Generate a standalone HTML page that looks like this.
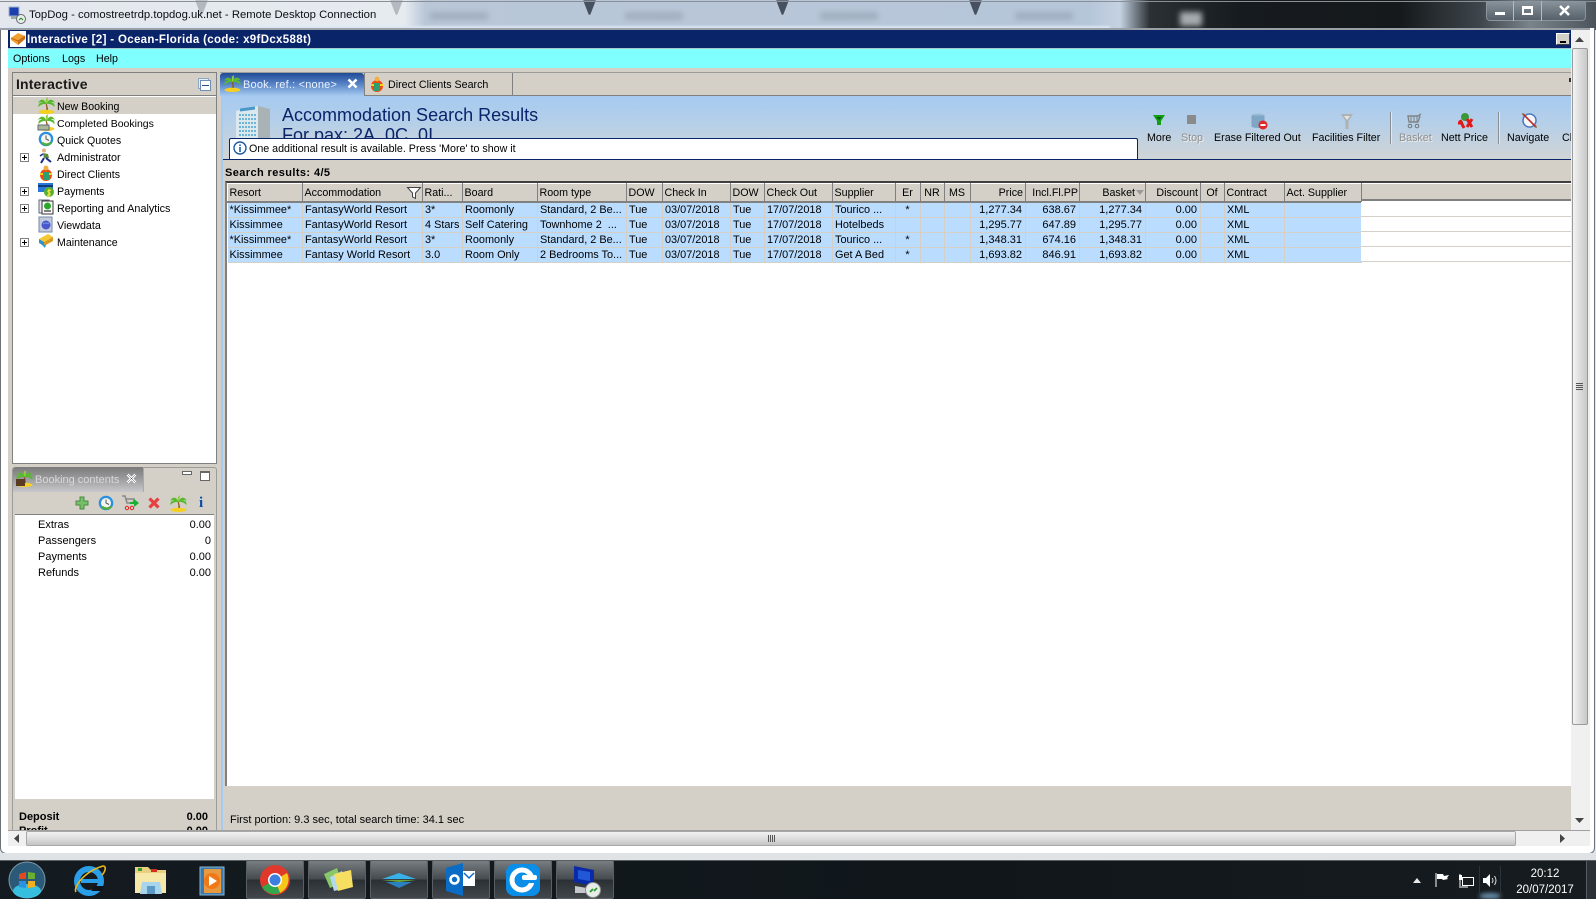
<!DOCTYPE html>
<html><head><meta charset="utf-8"><title>TopDog</title>
<style>
html,body{margin:0;padding:0;width:1596px;height:899px;overflow:hidden;background:#dfe6ee}
*{box-sizing:border-box}
body{font:10.7px "Liberation Sans",sans-serif;color:#000;position:relative}
.a{position:absolute;white-space:nowrap}
svg{position:absolute;overflow:visible}
.lb{position:absolute;white-space:nowrap;line-height:14px;height:14px;margin-top:1px}
.n{font-size:11px}
table{border-collapse:collapse;table-layout:fixed;position:absolute;left:227px;top:183px;width:1134px}
th{height:18px;background:#d4d0c8;font-weight:normal;text-align:left;padding:1px 0 0 1.5px;border-top:1px solid #fff;border-left:1px solid #fff;border-right:1px solid #808080;border-bottom:2px solid #808080;white-space:nowrap;overflow:hidden;line-height:14px;font-size:10.7px}
td{height:15px;background:#b9dcff;padding:1px 0 0 2px;border-right:1px solid #d4d0c8;border-bottom:1px solid #d4d0c8;white-space:nowrap;overflow:hidden;line-height:13px;font-size:10.9px}
th.r{text-align:right;padding:1px 2px 0 0}
td.r{text-align:right;padding:1px 3px 0 0;font-size:11px}
th.c,td.c{text-align:center;padding-left:0;padding-right:1px}
.rr{position:absolute;left:1361px;width:210px;height:15px;background:#fff;border-bottom:1px solid #d4d0c8}
.tb{position:absolute;top:860px;height:39px;width:58px;border:1px solid #5a5f64;border-radius:2px;background:linear-gradient(#777d81,#464b50 48%,#2b3034 52%,#42474c)}
.w{position:absolute;top:0;width:13px;height:15px;background:#2b3340;clip-path:polygon(0 0,100% 0,55% 100%,45% 100%);filter:blur(.8px)}
.g{position:absolute;top:12px;width:58px;height:8px;background:#8e9bab;filter:blur(3px);opacity:.55}
</style></head><body>

<!-- blurred title background -->
<div class="a" style="left:0;top:0;width:1596px;height:30px;background:linear-gradient(90deg,#e4e8ee 0,#e6ebf0 405px,#b9c7d8 425px,#b6c6d9 1090px,#c4d2e2 1120px,#2b3034 1150px,#161b1f 1240px,#15191c 1400px,#3e464b 1480px,#79838b 1530px,#4b545a 1596px);overflow:hidden">
  <div class="w" style="left:195px;background:#555c66;opacity:.35"></div><div class="w" style="left:390px;background:#555c66;opacity:.35"></div>
  <div class="w" style="left:583px;opacity:.8"></div><div class="w" style="left:776px;opacity:.8"></div><div class="w" style="left:969px;opacity:.8"></div>
  <div class="g" style="left:430px"></div><div class="g" style="left:625px"></div><div class="g" style="left:820px"></div><div class="g" style="left:1015px"></div>
  <div class="a" style="left:1180px;top:12px;width:22px;height:14px;background:#dfe4e8;filter:blur(3px);opacity:.7"></div>
  <div class="a" style="left:0;top:26px;width:1110px;height:4px;background:#dbe7f4;filter:blur(1px)"></div>
</div>
<div class="a" style="left:0;top:1px;width:1596px;height:1px;background:#8b9096"></div>

<!-- window body frame -->
<div class="a" style="left:0;top:28px;width:1595px;height:826px;background:#fff;border:1px solid #6e7378;border-top:0;border-radius:0 0 6px 6px"></div>
<div class="a" style="left:0;top:28px;width:1590px;height:2px;background:#9aa0a6"></div>
<div class="a" style="left:0;top:853px;width:1596px;height:7px;background:#dfe3e6"></div>

<!-- RDP icon + title -->
<svg style="left:8px;top:6px" width="18" height="18" viewBox="0 0 18 18"><rect x="1" y="1" width="10" height="9" fill="#1c3fb0" stroke="#9fb0c8"/><rect x="3" y="10" width="8" height="3" fill="#9aa"/><circle cx="13" cy="13" r="4.5" fill="#e8efe8" stroke="#667"/><path d="M11 14l2-2M13 12l2 2" stroke="#2a8a2a" stroke-width="1.2"/></svg>
<div class="a" style="left:29px;top:7px;font-size:11.3px;line-height:16px;color:#0a0f14">TopDog - comostreetrdp.topdog.uk.net - Remote Desktop Connection</div>

<!-- window controls -->
<div class="a" style="left:1486px;top:1px;width:100px;height:20px;border:1px solid #8d959c;border-top:0;border-radius:0 0 4px 4px;background:linear-gradient(#8a949c,#56606a)"></div>
<div class="a" style="left:1513px;top:1px;width:1px;height:20px;background:#b5bcc2"></div>
<div class="a" style="left:1541px;top:1px;width:1px;height:20px;background:#b5bcc2"></div>
<div class="a" style="left:1495px;top:12px;width:10px;height:3px;background:#fff"></div>
<div class="a" style="left:1522px;top:6px;width:11px;height:9px;border:2px solid #fff;border-top-width:3px"></div>
<svg style="left:1558px;top:5px" width="14" height="12"><path d="M2 1l9 9M11 1l-9 9" stroke="#fff" stroke-width="2.6"/></svg>

<!-- app title -->
<div class="a" style="left:8px;top:30px;width:1563px;height:18px;background:#0a246a"></div>
<div class="a" style="left:10px;top:31px;width:16px;height:16px;background:#fff"></div>
<svg style="left:10px;top:32px" width="16" height="14" viewBox="0 0 16 14"><path d="M1 6L8 1l7 3v3L8 13 1 8z" fill="#f0a030"/><path d="M1 6l7 3 7-5" fill="none" stroke="#c46a10"/><path d="M8 9v4l7-6V4z" fill="#c8701a"/></svg>
<div class="a" style="left:27px;top:32px;color:#fff;font-weight:bold;font-size:11.5px;line-height:16px;letter-spacing:.33px">Interactive [2] - Ocean-Florida (code: x9fDcx588t)</div>
<div class="a" style="left:1556px;top:33px;width:14px;height:12px;background:#d4d0c8;border:1px solid #fff;border-right-color:#404040;border-bottom-color:#404040"></div>
<div class="a" style="left:1560px;top:41px;width:6px;height:2px;background:#000"></div>

<!-- menu -->
<div class="a" style="left:8px;top:48px;width:1563px;height:20px;background:#80ffff;border-top:1px solid #a6c8d0"></div>
<div class="lb" style="left:13px;top:51px">Options</div>
<div class="lb" style="left:62px;top:51px">Logs</div>
<div class="lb" style="left:96px;top:51px">Help</div>

<!-- main background -->
<div class="a" style="left:8px;top:68px;width:1563px;height:762px;background:#d4d0c8"></div>

<!-- LEFT PANEL: Interactive -->
<div class="a" style="left:12px;top:72px;width:205px;height:392px;border:1px solid #808080;background:#fff"></div>
<div class="a" style="left:13px;top:73px;width:203px;height:23px;background:#d4d0c8;border-bottom:1px solid #808080"></div>
<div class="a" style="left:16px;top:76px;font-size:14px;font-weight:bold;line-height:17px;color:#1a1a1a;letter-spacing:.15px">Interactive</div>
<div class="a" style="left:198px;top:78px;width:11px;height:11px;border:1px solid #8fa6c0;background:#e8eef6"></div>
<div class="a" style="left:200px;top:80px;width:11px;height:11px;border:1px solid #6f8fb5;background:#fff"></div>
<div class="a" style="left:202px;top:85px;width:7px;height:1px;background:#2a4f8a"></div>
<div class="a" style="left:13px;top:97px;width:203px;height:17px;background:#d4d0c8"></div>

<div class="lb" style="left:57px;top:99px;font-size:10.6px">New Booking</div>
<div class="lb" style="left:57px;top:116px;font-size:10.5px">Completed Bookings</div>
<div class="lb" style="left:57px;top:133px;font-size:10.6px">Quick Quotes</div>
<div class="lb" style="left:57px;top:150px;font-size:10.8px">Administrator</div>
<div class="lb" style="left:57px;top:167px;font-size:10.6px">Direct Clients</div>
<div class="lb" style="left:57px;top:184px">Payments</div>
<div class="lb" style="left:57px;top:201px;font-size:10.8px">Reporting and Analytics</div>
<div class="lb" style="left:57px;top:218px">Viewdata</div>
<div class="lb" style="left:57px;top:235px;font-size:10.6px">Maintenance</div>

<svg width="0" height="0" style="position:absolute"><defs>
<symbol id="palm" viewBox="0 0 16 16"><path d="M7 6c1 3 1 5 .5 8h2C9.500 11 9 8 8 6z" fill="#8a5a20"/><path d="M8 6.500C6 1.500 2.500 1 0 5.500c2-1 3-1 4-.5-2.500 0-4 2-3.500 4.500C2.500 7 5 6.500 8 6.500zM8 6.500c2-5 5.500-5.500 8-1-2-1-3-1-4-.5 2.500 0 4 2 3.500 4.500C13.500 7 11 6.500 8 6.500z" fill="#58b82e"/><path d="M8 6.500C6.500 3.500 7.500 1 9 0c.5 2.500.5 4.500-1 6.500z" fill="#8ed040"/><ellipse cx="8" cy="14" rx="7.500" ry="2" fill="#f5d020"/></symbol>
<symbol id="clock" viewBox="0 0 16 16"><circle cx="8" cy="8" r="7.300" fill="#2b8fe0"/><circle cx="8" cy="8" r="5" fill="#f4f4f0"/><path d="M8 4.500V8l3 1.500" stroke="#555" fill="none"/><path d="M3 12a7 7 0 0 0 11 0l-2-1a5 5 0 0 1-7 0z" fill="#4cb030"/></symbol>
<symbol id="plus" viewBox="0 0 9 9"><rect x=".5" y=".5" width="8" height="8" fill="#fff" stroke="#808080"/><path d="M2 4.500h5M4.500 2v5" stroke="#000"/></symbol>
</defs></svg>

<svg style="left:38px;top:97px" width="17" height="17"><use href="#palm" width="17" height="17"/></svg>
<svg style="left:38px;top:114px" width="17" height="17"><use href="#palm" width="17" height="17"/><rect x="0" y="11" width="11" height="5" fill="#aab89a" stroke="#667"/></svg>
<svg style="left:38px;top:131px" width="16" height="16"><use href="#clock" width="16" height="16"/></svg>
<svg style="left:38px;top:148px" width="16" height="16" viewBox="0 0 16 16"><circle cx="6" cy="2.500" r="2" fill="#e8b080"/><path d="M5 5l5 1 1 4H6z" fill="#5a8a3a"/><path d="M6 10l-3 5M8 10l5 4" stroke="#1a2a8a" stroke-width="2"/><path d="M5 6L2 8" stroke="#1a2a8a" stroke-width="1.500"/></svg>
<svg style="left:38px;top:165px" width="16" height="16" viewBox="0 0 16 16"><circle cx="8" cy="10" r="6" fill="#f04a10"/><rect x="5" y="7" width="6" height="8" fill="#2aa070"/><circle cx="8" cy="3" r="2.400" fill="#f0b040"/><path d="M2 9h3M11 9h3" stroke="#f5d020" stroke-width="2"/></svg>
<svg style="left:38px;top:182px" width="16" height="16" viewBox="0 0 16 16"><rect x="0" y="1" width="15" height="9" fill="#2a78d8"/><rect x="0" y="3" width="15" height="2" fill="#123a80"/><circle cx="11" cy="10" r="5" fill="#58b030"/><path d="M9 13c3 1 4-1 2-2.500-2-1-1-3 2-2M11 7v8" stroke="#f6e040" fill="none" stroke-width="1.200"/></svg>
<svg style="left:38px;top:199px" width="16" height="16" viewBox="0 0 16 16"><rect x="1" y="1" width="10" height="13" fill="#e8e8ee" stroke="#667"/><rect x="4" y="2" width="11" height="13" fill="#fff" stroke="#333"/><circle cx="9.500" cy="7" r="3.500" fill="#2aa82a"/><path d="M6 12h7" stroke="#000"/></svg>
<svg style="left:38px;top:216px" width="16" height="16" viewBox="0 0 16 16"><rect x="1" y="1" width="13" height="15" fill="#c4ccdc" stroke="#7788a8"/><circle cx="8" cy="9" r="4.500" fill="#4a58d0"/><path d="M5 8c2-2 4 0 6-1" stroke="#80a0f0"/></svg>
<svg style="left:38px;top:233px" width="16" height="16" viewBox="0 0 16 16"><path d="M1 6l9-5 5 3-9 5z" fill="#f4c830"/><path d="M1 6l5 3v4L1 10z" fill="#2a90d0"/><path d="M6 9l9-5v4l-9 5z" fill="#d89a20"/><path d="M3 11l4 4 1-3z" fill="#2aa0d8"/></svg>

<svg style="left:20px;top:153px" width="9" height="9"><use href="#plus" width="9" height="9"/></svg>
<svg style="left:20px;top:187px" width="9" height="9"><use href="#plus" width="9" height="9"/></svg>
<svg style="left:20px;top:204px" width="9" height="9"><use href="#plus" width="9" height="9"/></svg>
<svg style="left:20px;top:238px" width="9" height="9"><use href="#plus" width="9" height="9"/></svg>

<!-- LEFT PANEL: Booking -->
<div class="a" style="left:12px;top:467px;width:205px;height:363px;border:1px solid #9c9c98;border-bottom:0;border-radius:3px 3px 0 0;background:#d4d0c8"></div>
<div class="a" style="left:13px;top:467px;width:131px;height:25px;background:linear-gradient(#7a7a7a,#9a9a9c 45%,#c8c8cc);border-right:1px solid #aaa;border-radius:3px 0 0 0"></div>
<svg style="left:16px;top:470px" width="17" height="17"><use href="#palm" width="17" height="17"/><rect x="0" y="9" width="9" height="7" fill="#5a3a22"/></svg>
<div class="lb n" style="left:35px;top:472px;color:#d8d8d8">Booking contents</div>
<svg style="left:126px;top:473px" width="11" height="11"><path d="M1.500 1.500l8 8M9.500 1.500l-8 8" stroke="#fff" stroke-width="2.600"/><path d="M1.500 1.500l8 8M9.500 1.500l-8 8" stroke="#444" stroke-width=".5"/></svg>
<div class="a" style="left:182px;top:471px;width:10px;height:4px;background:#fff;border:1px solid #666"></div>
<div class="a" style="left:200px;top:471px;width:10px;height:10px;background:#fff;border:1px solid #666;border-top-width:2px"></div>
<div class="a" style="left:15px;top:492px;width:199px;height:23px;background:#d4d0c8;border-bottom:1px solid #808080"></div>
<svg style="left:76px;top:497px" width="12" height="12"><path d="M4 0h4v4h4v4H8v4H4V8H0V4h4z" fill="#76c06a" stroke="#4e8a44"/></svg>
<svg style="left:98px;top:495px" width="16" height="16"><use href="#clock" width="16" height="16"/></svg>
<svg style="left:122px;top:495px" width="17" height="16" viewBox="0 0 17 16"><path d="M0 1h3l2 7h6l1-4H4" fill="none" stroke="#888" stroke-width="1.500"/><circle cx="5" cy="13" r="1.700" fill="none" stroke="#e02020"/><circle cx="10" cy="13" r="1.700" fill="none" stroke="#e02020"/><path d="M8 7h4V4l5 4-5 4V9H8z" fill="#18b030"/></svg>
<svg style="left:148px;top:497px" width="12" height="12"><path d="M1.500 1.500l9 9M10.500 1.500l-9 9" stroke="#e84040" stroke-width="3.200"/></svg>
<svg style="left:170px;top:495px" width="17" height="17"><use href="#palm" width="17" height="17"/></svg>
<div class="a" style="left:199px;top:495px;font:bold 15px/16px 'Liberation Serif',serif;color:#0a4aa8">i</div>
<div class="a" style="left:15px;top:515px;width:199px;height:284px;background:#fff"></div>
<div class="lb n" style="left:38px;top:517px">Extras</div><div class="lb n" style="right:1385px;top:517px">0.00</div>
<div class="lb n" style="left:38px;top:533px">Passengers</div><div class="lb n" style="right:1385px;top:533px">0</div>
<div class="lb n" style="left:38px;top:549px">Payments</div><div class="lb n" style="right:1385px;top:549px">0.00</div>
<div class="lb n" style="left:38px;top:565px">Refunds</div><div class="lb n" style="right:1385px;top:565px">0.00</div>
<div class="lb n" style="left:19px;top:809px;font-weight:bold">Deposit</div><div class="lb n" style="right:1388px;top:809px;font-weight:bold">0.00</div>
<div class="lb n" style="left:19px;top:823px;font-weight:bold">Profit</div><div class="lb n" style="right:1388px;top:823px;font-weight:bold">0.00</div>

<!-- splitter blue line -->
<div class="a" style="left:221px;top:96px;width:2px;height:734px;background:#a6caf0"></div>

<!-- Tabs -->
<div class="a" style="left:220px;top:72px;width:1351px;height:24px;background:#d4d0c8;border-top:1px solid #9c9c98;border-bottom:1px solid #808080"></div>
<div class="a" style="left:220px;top:73px;width:144px;height:23px;border-radius:3px 3px 0 0;background:linear-gradient(#1f4a96,#5a86c8 50%,#a6caf0)"></div>
<div class="a" style="left:364px;top:73px;width:149px;height:23px;border-right:1px solid #808080;border-left:1px solid #808080"></div>
<svg style="left:224px;top:75px" width="17" height="17"><use href="#palm" width="17" height="17"/></svg>
<div class="lb n" style="left:243px;top:77px;color:#eaf2ff;letter-spacing:.2px">Book. ref.: &lt;none&gt;</div>
<svg style="left:347px;top:78px" width="11" height="11"><path d="M1.500 1.500l8 8M9.500 1.500l-8 8" stroke="#fff" stroke-width="2.600"/></svg>
<svg style="left:369px;top:76px" width="16" height="16" viewBox="0 0 16 16"><circle cx="8" cy="10" r="6" fill="#f04a10"/><rect x="5" y="7" width="6" height="8" fill="#2aa070"/><circle cx="8" cy="3" r="2.400" fill="#f0b040"/><path d="M2 9h3M11 9h3" stroke="#f5d020" stroke-width="2"/></svg>
<div class="lb" style="left:388px;top:77px">Direct Clients Search</div>
<div class="a" style="left:1569px;top:78px;width:2px;height:4px;background:#333"></div>

<!-- blue header -->
<div class="a" style="left:223px;top:96px;width:1348px;height:64px;background:linear-gradient(#a6caf0,#b4cfe9 40%,#d0d4d6);border-bottom:1px solid #0a246a"></div>
<svg style="left:236px;top:103px" width="36" height="36" viewBox="0 0 36 36"><path d="M0 8L22 3v33H0z" fill="#dbe8ee"/><path d="M22 3l12 3v30H22z" fill="#a9b3b6"/><path d="M4 5.500l15-2v3l-15 2z" fill="#4a98c8"/><path d="M3 12h17M3 16h17M3 20h17M3 24h17M3 28h17M3 32h17" stroke="#6cb4d8" stroke-width="2" stroke-dasharray="2 1"/></svg>
<div class="a" style="left:282px;top:104px;font-size:18px;line-height:22px;color:#0a246a">Accommodation Search Results</div>
<div class="a" style="left:282px;top:124px;height:14px;overflow:hidden;font-size:18px;line-height:22px;color:#0a246a">For pax: 2A, 0C, 0I</div>
<div class="a" style="left:229px;top:138px;width:909px;height:21px;background:#fff;border:1px solid #0a246a;border-bottom:0;border-radius:2px 2px 0 0"></div>
<svg style="left:233px;top:141px" width="14" height="14"><circle cx="7" cy="7" r="6" fill="#fff" stroke="#1a5aa8" stroke-width="1.400"/><path d="M7 3.500v1.500M7 6v5" stroke="#1a5aa8" stroke-width="1.600"/></svg>
<div class="lb" style="left:249px;top:141px">One additional result is available. Press 'More' to show it</div>

<!-- toolbar -->
<svg style="left:1153px;top:114px" width="12" height="12"><path d="M0 1h12L8 7v4H4V7z" fill="#12a012"/><path d="M3 3h6L6 6z" fill="#0a600a"/></svg>
<div class="a" style="left:1187px;top:115px;width:9px;height:9px;background:#8a8a8a"></div>
<svg style="left:1251px;top:113px" width="18" height="17"><ellipse cx="7" cy="2.500" rx="6.500" ry="2" fill="#9abcd4"/><path d="M.5 2.500v11c1 2 12 2 13 0v-11" fill="#7fa6c4"/><circle cx="12" cy="12" r="4.500" fill="#e02828"/><rect x="9.500" y="11" width="5" height="2" fill="#fff"/></svg>
<svg style="left:1341px;top:113px" width="12" height="17"><path d="M0 1h12L7.500 8v8h-3V8z" fill="#aeb2b2"/><path d="M3 3h6L6 7z" fill="#e4e4e4"/></svg>
<div class="a" style="left:1390px;top:112px;width:1px;height:32px;background:#8a8f96"></div>
<div class="a" style="left:1391px;top:112px;width:1px;height:32px;background:#e4e8ec"></div>
<svg style="left:1407px;top:113px" width="15" height="16" viewBox="0 0 15 16"><path d="M14 1L11 3H1l1 6h9l2-6" fill="none" stroke="#808488" stroke-width="1.400"/><path d="M4 3v6M7 3v6M10 3v6" stroke="#808488"/><circle cx="3" cy="13" r="1.800" fill="none" stroke="#707478"/><circle cx="10" cy="13" r="1.800" fill="none" stroke="#707478"/></svg>
<svg style="left:1457px;top:112px" width="17" height="17" viewBox="0 0 17 17"><circle cx="8" cy="5" r="4" fill="#38983a"/><path d="M1 11h5M3 8l4 8M10 7l5 8M15 7l-5 8" stroke="#e01818" stroke-width="3"/></svg>
<div class="a" style="left:1498px;top:112px;width:1px;height:32px;background:#8a8f96"></div>
<div class="a" style="left:1499px;top:112px;width:1px;height:32px;background:#e4e8ec"></div>
<svg style="left:1521px;top:112px" width="17" height="17" viewBox="0 0 17 17"><circle cx="8.500" cy="8.500" r="6.500" fill="#f4f6fa" stroke="#4a78b8" stroke-width="1.500"/><path d="M2 2l13 13" stroke="#c02828" stroke-width="1.600"/><path d="M1 1l3 1-2 2zM16 16l-3-1 2-2z" fill="#8a6020"/></svg>
<div class="lb" style="left:1147px;top:130px">More</div>
<div class="lb" style="left:1181px;top:130px;color:#8f8f8f;text-shadow:1px 1px 0 #eee">Stop</div>
<div class="lb" style="left:1214px;top:130px">Erase Filtered Out</div>
<div class="lb" style="left:1312px;top:130px">Facilities Filter</div>
<div class="lb" style="left:1399px;top:130px;color:#8f8f8f;text-shadow:1px 1px 0 #eee">Basket</div>
<div class="lb" style="left:1441px;top:130px">Nett Price</div>
<div class="lb" style="left:1507px;top:130px">Navigate</div>
<div class="a" style="left:1562px;top:131px;width:9px;height:14px;line-height:14px;overflow:hidden">Close</div>

<!-- Search results label -->
<div class="lb n" style="left:225px;top:165px;font-weight:bold;letter-spacing:.4px">Search results: 4/5</div>

<!-- Table area -->
<div class="a" style="left:225px;top:181px;width:1346px;height:605px;background:#fff;border-top:2px solid #404040;border-left:2px solid #808080"></div>
<div class="a" style="left:1361px;top:183px;width:210px;height:18px;background:#d4d0c8;border-bottom:2px solid #808080;border-top:1px solid #fff"></div>
<table>
<colgroup><col style="width:75px"><col style="width:120px"><col style="width:40px"><col style="width:75px"><col style="width:89px"><col style="width:36px"><col style="width:68px"><col style="width:34px"><col style="width:68px"><col style="width:63px"><col style="width:25px"><col style="width:24px"><col style="width:26px"><col style="width:55px"><col style="width:54px"><col style="width:66px"><col style="width:55px"><col style="width:24px"><col style="width:60px"><col style="width:77px"></colgroup>
<tr><th>Resort</th><th>Accommodation</th><th>Rati...</th><th>Board</th><th>Room type</th><th>DOW</th><th>Check In</th><th>DOW</th><th>Check Out</th><th>Supplier</th><th class="c">Er</th><th class="c">NR</th><th class="c">MS</th><th class="r">Price</th><th class="r" style="padding-right:1px">Incl.Fl.PP</th><th class="r" style="padding-right:10px">Basket</th><th class="r">Discount</th><th class="c">Of</th><th>Contract</th><th>Act. Supplier</th></tr>
<tr><td>*Kissimmee*</td><td>FantasyWorld Resort</td><td>3*</td><td>Roomonly</td><td>Standard, 2 Be...</td><td>Tue</td><td>03/07/2018</td><td>Tue</td><td>17/07/2018</td><td>Tourico ...</td><td class="c">*</td><td></td><td></td><td class="r">1,277.34</td><td class="r">638.67</td><td class="r">1,277.34</td><td class="r">0.00</td><td></td><td>XML</td><td></td></tr>
<tr><td>Kissimmee</td><td>FantasyWorld Resort</td><td>4 Stars</td><td>Self Catering</td><td>Townhome 2 &nbsp;...</td><td>Tue</td><td>03/07/2018</td><td>Tue</td><td>17/07/2018</td><td>Hotelbeds</td><td></td><td></td><td></td><td class="r">1,295.77</td><td class="r">647.89</td><td class="r">1,295.77</td><td class="r">0.00</td><td></td><td>XML</td><td></td></tr>
<tr><td>*Kissimmee*</td><td>FantasyWorld Resort</td><td>3*</td><td>Roomonly</td><td>Standard, 2 Be...</td><td>Tue</td><td>03/07/2018</td><td>Tue</td><td>17/07/2018</td><td>Tourico ...</td><td class="c">*</td><td></td><td></td><td class="r">1,348.31</td><td class="r">674.16</td><td class="r">1,348.31</td><td class="r">0.00</td><td></td><td>XML</td><td></td></tr>
<tr><td>Kissimmee</td><td>Fantasy World Resort</td><td>3.0</td><td>Room Only</td><td>2 Bedrooms To...</td><td>Tue</td><td>03/07/2018</td><td>Tue</td><td>17/07/2018</td><td>Get A Bed</td><td class="c">*</td><td></td><td></td><td class="r">1,693.82</td><td class="r">846.91</td><td class="r">1,693.82</td><td class="r">0.00</td><td></td><td>XML</td><td></td></tr>
</table>
<div class="rr" style="top:202px"></div><div class="rr" style="top:217px"></div><div class="rr" style="top:232px"></div><div class="rr" style="top:247px"></div>
<svg style="left:407px;top:187px" width="14" height="12"><path d="M.5 .5h13L8.500 6v5.500L5.500 10V6z" fill="#fff" stroke="#444"/></svg>
<svg style="left:1136px;top:190px" width="8" height="5"><path d="M0 0h8L4 5z" fill="#9a9a9a"/></svg>

<div class="lb n" style="left:230px;top:812px">First portion: 9.3 sec, total search time: 34.1 sec</div>

<!-- Vertical scrollbar -->
<div class="a" style="left:1571px;top:30px;width:19px;height:800px;background:#f0f0f0"></div>
<div class="a" style="left:1572px;top:48px;width:16px;height:677px;border:1px solid #9a9a9a;border-radius:2px;background:linear-gradient(90deg,#f4f4f4,#dcdcdc 50%,#c8c8c8)"></div>
<svg style="left:1575px;top:37px" width="9" height="5"><path d="M0 5h9L4.500 0z" fill="#444"/></svg>
<svg style="left:1575px;top:818px" width="9" height="5"><path d="M0 0h9L4.500 5z" fill="#444"/></svg>
<div class="a" style="left:1576px;top:383px;width:7px;height:7px;background:repeating-linear-gradient(#555 0 1px,transparent 1px 2px)"></div>

<!-- Horizontal scrollbar -->
<div class="a" style="left:8px;top:830px;width:1582px;height:16px;background:#f0f0f0;border-top:1px solid #a0a0a0"></div>
<div class="a" style="left:26px;top:831px;width:1490px;height:15px;border:1px solid #a8a8a8;border-radius:2px;background:linear-gradient(#f2f2f2,#dedede 50%,#c4c4c4)"></div>
<svg style="left:14px;top:834px" width="5" height="9"><path d="M5 0v9L0 4.500z" fill="#444"/></svg>
<svg style="left:1560px;top:834px" width="5" height="9"><path d="M0 0v9l5-4.500z" fill="#444"/></svg>
<div class="a" style="left:768px;top:835px;width:7px;height:7px;background:repeating-linear-gradient(90deg,#555 0 1px,transparent 1px 2px)"></div>

<!-- Taskbar -->
<div class="a" style="left:0;top:860px;width:1596px;height:39px;background:linear-gradient(90deg,#141b20,#10161a 60%,#161c20);border-top:1px solid #5a5f64"></div>
<svg style="left:7px;top:861px" width="40" height="38" viewBox="0 0 40 38"><circle cx="20" cy="19" r="18" fill="#2a5a78" stroke="#7a98a8"/><ellipse cx="20" cy="30" rx="14" ry="7" fill="#38c8e8" opacity=".9"/><path d="M12 13l7-2v7h-7z" fill="#e04a20"/><path d="M21 11l7 1v6h-7z" fill="#6ab030"/><path d="M12 20h7v7l-7-1z" fill="#2a90e0"/><path d="M21 20h7v6l-7 1z" fill="#f0b020"/></svg>
<svg style="left:73px;top:864px" width="34" height="32" viewBox="0 0 34 32"><circle cx="16" cy="17" r="12" fill="none" stroke="#2a9ee8" stroke-width="6"/><rect x="8" y="15" width="17" height="4" fill="#2a9ee8"/><path d="M22 22h10l-3 5H18z" fill="#0f151a"/><path d="M3 28C0 24 10 8 30 2c4 0 2 6-1 9" fill="none" stroke="#e8b820" stroke-width="1.600"/></svg>
<svg style="left:134px;top:864px" width="34" height="32" viewBox="0 0 34 32"><path d="M1 3h13l3 3h15v22H1z" fill="#e8d080"/><rect x="1" y="9" width="31" height="20" fill="#f6e8a8"/><rect x="4" y="4" width="4" height="3" fill="#30a030"/><rect x="17" y="5" width="6" height="3" fill="#d03020"/><path d="M8 18h18l2 12H6z" fill="#a8d4ec"/><rect x="13" y="22" width="8" height="8" fill="#5a9ac4"/></svg>
<svg style="left:199px;top:866px" width="26" height="30" viewBox="0 0 26 30"><rect x="1" y="1" width="24" height="28" fill="#3a7ab0" stroke="#8ab4d0"/><rect x="5" y="3" width="17" height="24" fill="#e89a40"/><circle cx="13" cy="15" r="8" fill="#f07818"/><path d="M10 10l8 5-8 5z" fill="#fff"/></svg>

<div class="tb" style="left:246px"></div><div class="tb" style="left:308px"></div><div class="tb" style="left:370px"></div><div class="tb" style="left:432px"></div><div class="tb" style="left:494px"></div><div class="tb" style="left:556px"></div>

<svg style="left:260px;top:865px" width="30" height="30" viewBox="0 0 30 30"><circle cx="15" cy="15" r="15" fill="#e0392b"/><path d="M15 15L27 8a15 15 0 0 1-7 20z" fill="#f6c71b"/><path d="M15 15l5 13A15 15 0 0 1 2 22z" fill="#2fa84f"/><circle cx="15" cy="15" r="7" fill="#fff"/><circle cx="15" cy="15" r="5.500" fill="#3c7fe0"/></svg>
<svg style="left:320px;top:865px" width="34" height="30" viewBox="0 0 34 30"><path d="M4 9l13-6 5 15-12 5z" fill="#86c86a"/><path d="M10 12l12-6 4 17-12 3z" fill="#b4d8f0"/><path d="M14 9l17-4 2 17-15 4z" fill="#f6de60"/></svg>
<svg style="left:382px;top:871px" width="34" height="18" viewBox="0 0 34 18"><path d="M0 8L17 2l17 6z" fill="#38b0e8"/><path d="M0 9h34L17 11z" fill="#6aa838"/><path d="M4 11h26L17 17z" fill="#2a80c0"/></svg>
<svg style="left:446px;top:863px" width="30" height="33" viewBox="0 0 30 33"><path d="M0 5L17 0v33L0 28z" fill="#0a6cc4"/><rect x="17" y="8" width="12" height="15" fill="#fff"/><path d="M18 10l5 5 5-5" fill="none" stroke="#0a6cc4" stroke-width="1.500"/><circle cx="8.500" cy="16.500" r="4" fill="none" stroke="#fff" stroke-width="2.600"/></svg>
<svg style="left:506px;top:864px" width="34" height="32" viewBox="0 0 34 32"><rect x="0" y="0" width="34" height="32" rx="8" fill="#0a8ee8"/><circle cx="16" cy="16" r="10" fill="none" stroke="#fff" stroke-width="5"/><rect x="16" y="11" width="15" height="5" rx="2" fill="#fff"/><rect x="16" y="16" width="15" height="3" fill="#0a8ee8"/></svg>
<svg style="left:570px;top:866px" width="32" height="32" viewBox="0 0 32 32"><path d="M4 0l20 4v16L4 16z" fill="#0a2aa8"/><path d="M8 4l12 2v9L8 13z" fill="#2058d8"/><path d="M5 20l18 3v4H5z" fill="#c4c8cc"/><circle cx="23" cy="24" r="7.500" fill="#e8ece8" stroke="#8a8f8a"/><path d="M20 26l3-3M24 25l3-3" stroke="#2a9a2a" stroke-width="1.800"/></svg>

<!-- tray -->
<svg style="left:1413px;top:878px" width="8" height="5"><path d="M0 5h8L4 0z" fill="#e8e8e8"/></svg>
<svg style="left:1435px;top:873px" width="15" height="14"><path d="M1 0v14" stroke="#fff"/><path d="M2 1h6l1 2 5-1-2 3 1 1-5 1-1-1H2z" fill="#fff"/></svg>
<svg style="left:1459px;top:874px" width="15" height="14"><rect x="3.500" y="3.500" width="11" height="8" fill="none" stroke="#fff"/><path d="M1 0v12M0 13h9M4 13h4" stroke="#fff"/><rect x="0" y="1" width="3" height="5" fill="#fff"/></svg>
<svg style="left:1483px;top:873px" width="15" height="15"><path d="M0 5h3l4-4v13l-4-4H0z" fill="#fff"/><path d="M9 5q2 2.500 0 5M11.500 3q3 4.500 0 9" fill="none" stroke="#ddd"/></svg>
<div class="a" style="left:1479px;top:893px;width:22px;height:6px;border-radius:50%;background:#6a90ac;filter:blur(2px)"></div>
<div class="a" style="left:1479px;top:866px;width:1px;height:33px;background:#2b3238"></div>
<div class="a" style="left:1500px;top:866px;width:1px;height:33px;background:#2b3238"></div>
<div class="a" style="left:1500px;top:867px;width:90px;text-align:center;line-height:14px;color:#fff;font-size:11.5px">20:12</div>
<div class="a" style="left:1500px;top:883px;width:90px;text-align:center;line-height:14px;color:#fff;font-size:11.5px">20/07/2017</div>
<div class="a" style="left:1586px;top:861px;width:10px;height:38px;background:#2a3036;border-left:1px solid #565c62"></div>
</body></html>
